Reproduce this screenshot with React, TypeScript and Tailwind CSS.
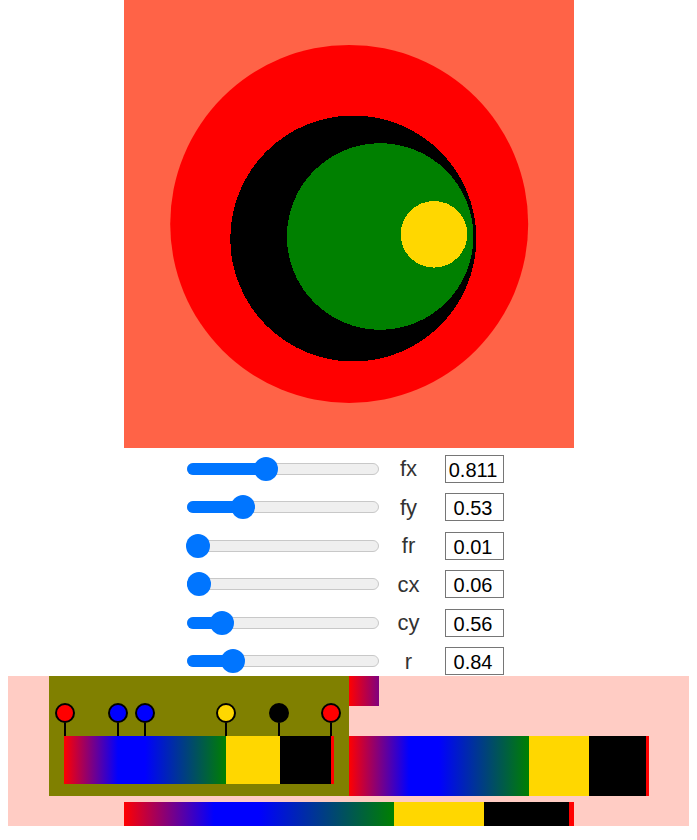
import React from "react";

const GRAD =
  "bg-[linear-gradient(to_right,#ff0000_0%,#0000ff_20%,#0000ff_30%,#008000_60%,#ffd700_60%,#ffd700_80%,#000000_80%,#000000_99%,#ff0000_99%,#ff0000_100%)]";

const sliders = [
  { l: "fx", v: "0.811", p: 78.7 },
  { l: "fy", v: "0.53", p: 55.5 },
  { l: "fr", v: "0.01", p: 11 },
  { l: "cx", v: "0.06", p: 12.3 },
  { l: "cy", v: "0.56", p: 34.7 },
  { l: "r", v: "0.84", p: 46 },
];

const markers = [
  { c: 0.7, color: "#ff0000" },
  { c: 54.3, color: "#0000ff" },
  { c: 81, color: "#0000ff" },
  { c: 162, color: "#ffd700" },
  { c: 215.3, color: "#000000" },
  { c: 266.7, color: "#ff0000" },
];

function Slider({ p }: { p: number }) {
  return (
    <div className="relative w-[192px] h-[12px]">
      <div className="absolute inset-0 rounded-full bg-[#efefef] border border-[#c8c8c8]" />
      <div
        className="absolute left-0 top-0 h-full rounded-full bg-[#0075ff]"
        style={{ width: p }}
      />
      <div
        className="absolute top-1/2 -translate-y-1/2 w-[24px] h-[24px] rounded-full bg-[#0075ff]"
        style={{ left: p - 12 }}
      />
    </div>
  );
}

export default function App() {
  return (
    <div className="bg-white font-['Liberation_Sans',Arial,sans-serif] w-[697px]">
      <div className="mx-auto w-[450px] h-[448px] bg-[#ff6347]">
        <svg width={450} height={448} className="block">
          <circle cx={225.2} cy={223.9} r={179} fill="#ff0000" />
          <circle cx={229.3} cy={238.5} r={123} fill="#000000" shapeRendering="crispEdges" />
          <circle cx={256.2} cy={236.5} r={93.3} fill="#008000" shapeRendering="crispEdges" />
          <circle cx={310} cy={234.3} r={33.3} fill="#ffd700" shapeRendering="crispEdges" />
        </svg>
      </div>

      <div className="flex flex-col pt-[1.5px] h-[228px]">
        {sliders.map((s) => (
          <div key={s.l} className="flex items-center h-[38.5px] shrink-0 pl-[187px]">
            <Slider p={s.p} />
            <div className="w-[59px] text-center text-[22px] text-[#333333] leading-normal">
              {s.l}
            </div>
            <div className="ml-[7px] w-[59px] h-[28px] border border-[#767676] bg-white flex items-center justify-center text-[20px] text-black leading-none pr-[3px] pt-[2px]">
              {s.v}
            </div>
          </div>
        ))}
      </div>

      <div className="mx-[8px] h-[150px] bg-[#ffccc4]">
        <div className="flex items-start">
          <div className="ml-[41px] w-[300px] h-[120px] bg-[#808000] pl-[15px]">
            <div className="relative w-[270px] h-[60px]">
              {markers.map((m, i) => (
                <div
                  key={i}
                  className="absolute top-[27px] flex flex-col items-center w-[20px]"
                  style={{ left: m.c - 10 }}
                >
                  <div
                    className="w-[20px] h-[20px] rounded-full border-2 border-black"
                    style={{ backgroundColor: m.color }}
                  />
                  <div className="w-[2px] h-[13px] bg-black" />
                </div>
              ))}
            </div>
            <div className={`w-[270px] h-[48px] ${GRAD}`} />
          </div>
          <div className="flex flex-col">
            <div className="w-[30px] h-[30px] bg-[linear-gradient(to_right,#ff0000,#800080)]" />
            <div className={`mt-[30px] w-[300px] h-[60px] ${GRAD}`} />
          </div>
        </div>
        <div className={`ml-[116px] mt-[6px] w-[450px] h-[30px] ${GRAD}`} />
      </div>
    </div>
  );
}
